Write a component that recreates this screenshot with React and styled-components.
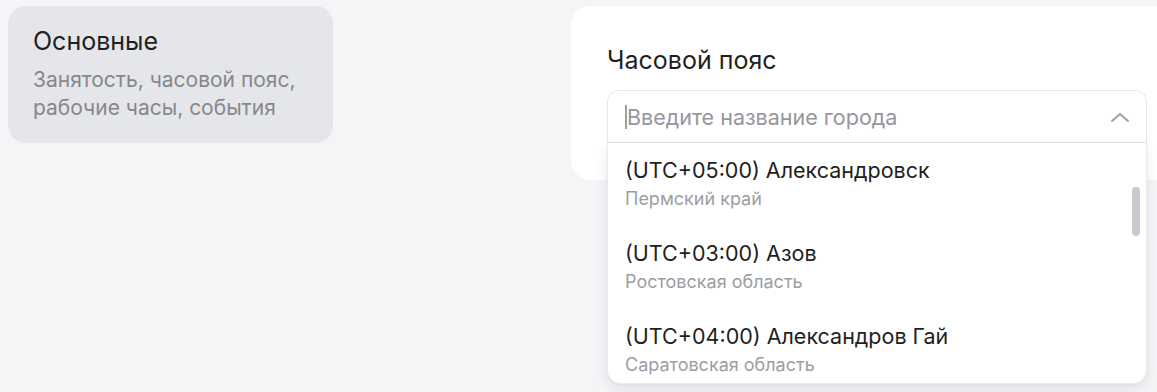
import React from "react";
import styled, { createGlobalStyle } from "styled-components";

const Global = createGlobalStyle`
  html, body { margin: 0; padding: 0; background: #f4f5f7; }
  body { font-family: Inter, "Noto Sans", sans-serif; color: #1f1f22; overflow: hidden; }
  #root { width: 1157px; height: 392px; overflow: hidden; }
`;

const Page = styled.div`
  display: flex;
  align-items: flex-start;
  gap: 238px;
  padding: 6px 0 0 8px;
  height: 392px;
  box-sizing: border-box;
`;

const NavCard = styled.div`
  flex: 0 0 325px;
  height: 137px;
  box-sizing: border-box;
  background: #e5e6ea;
  border-radius: 18px;
  padding: 20px 25px;
`;

const NavTitle = styled.div`
  font-size: 25px;
  line-height: 30px;
  color: #1f1f22;
`;

const NavSub = styled.div`
  margin-top: 10px;
  font-size: 21px;
  line-height: 28px;
  color: #87878d;
`;

const SettingsCard = styled.div`
  flex: 0 0 640px;
  height: 174px;
  box-sizing: border-box;
  background: #ffffff;
  border-radius: 20px;
  padding: 39px 0 0 36px;
`;

const Label = styled.div`
  font-size: 25px;
  line-height: 30px;
  color: #1f1f22;
`;

const Combo = styled.div`
  position: relative;
  margin-top: 15px;
  width: 540px;
  z-index: 2;
`;

const Field = styled.div`
  height: 53px;
  box-sizing: border-box;
  border: 1px solid #e8e8ec;
  border-bottom: 1px solid #e3e3e8;
  border-radius: 12px 12px 0 0;
  background: #fff;
  display: flex;
  align-items: center;
  padding: 0 16px 0 17px;
`;

const Caret = styled.span`
  display: inline-block;
  width: 1.5px;
  height: 24px;
  background: #a0a0a6;
  margin-right: 0.5px;
`;

const Placeholder = styled.span`
  flex: 1;
  font-size: 21.5px;
  line-height: 26px;
  color: #96969c;
`;

const Chevron = styled.svg`
  width: 20px;
  height: 12px;
  flex: none;
`;

const Dropdown = styled.div`
  position: relative;
  height: 240px;
  overflow: hidden;
  background: #fff;
  border: 1px solid #ececf0;
  border-top: none;
  border-radius: 0 0 14px 14px;
  box-shadow: 0 6px 14px rgba(30, 30, 60, 0.08), 0 1px 3px rgba(30, 30, 60, 0.05);
`;

const Option = styled.div`
  padding: 14px 17px 16px;
  display: flex;
  flex-direction: column;
  gap: 5px;
`;

const OptionTitle = styled.div`
  font-size: 21.5px;
  line-height: 26px;
  color: #1f1f22;
`;

const OptionSub = styled.div`
  font-size: 18px;
  line-height: 22px;
  color: #9d9da3;
`;

const Thumb = styled.div`
  position: absolute;
  top: 44px;
  right: 6px;
  width: 8px;
  height: 49px;
  border-radius: 4px;
  background: #c9cacf;
`;

const options = [
  { title: "(UTC+05:00) Александровск", sub: "Пермский край" },
  { title: "(UTC+03:00) Азов", sub: "Ростовская область" },
  { title: "(UTC+04:00) Александров Гай", sub: "Саратовская область" },
];

export default function App() {
  return (
    <>
      <Global />
      <Page>
        <NavCard>
          <NavTitle>Основные</NavTitle>
          <NavSub>
            Занятость, часовой пояс,
            <br />
            рабочие часы, события
          </NavSub>
        </NavCard>
        <SettingsCard>
          <Label>Часовой пояс</Label>
          <Combo>
            <Field>
              <Caret />
              <Placeholder>Введите название города</Placeholder>
              <Chevron viewBox="0 0 20 12">
                <path
                  d="M2 10 L10 3 L18 10"
                  fill="none"
                  stroke="#a2a2a8"
                  strokeWidth="2"
                  strokeLinecap="round"
                  strokeLinejoin="round"
                />
              </Chevron>
            </Field>
            <Dropdown>
              {options.map((o) => (
                <Option key={o.title}>
                  <OptionTitle>{o.title}</OptionTitle>
                  <OptionSub>{o.sub}</OptionSub>
                </Option>
              ))}
              <Thumb />
            </Dropdown>
          </Combo>
        </SettingsCard>
      </Page>
    </>
  );
}
